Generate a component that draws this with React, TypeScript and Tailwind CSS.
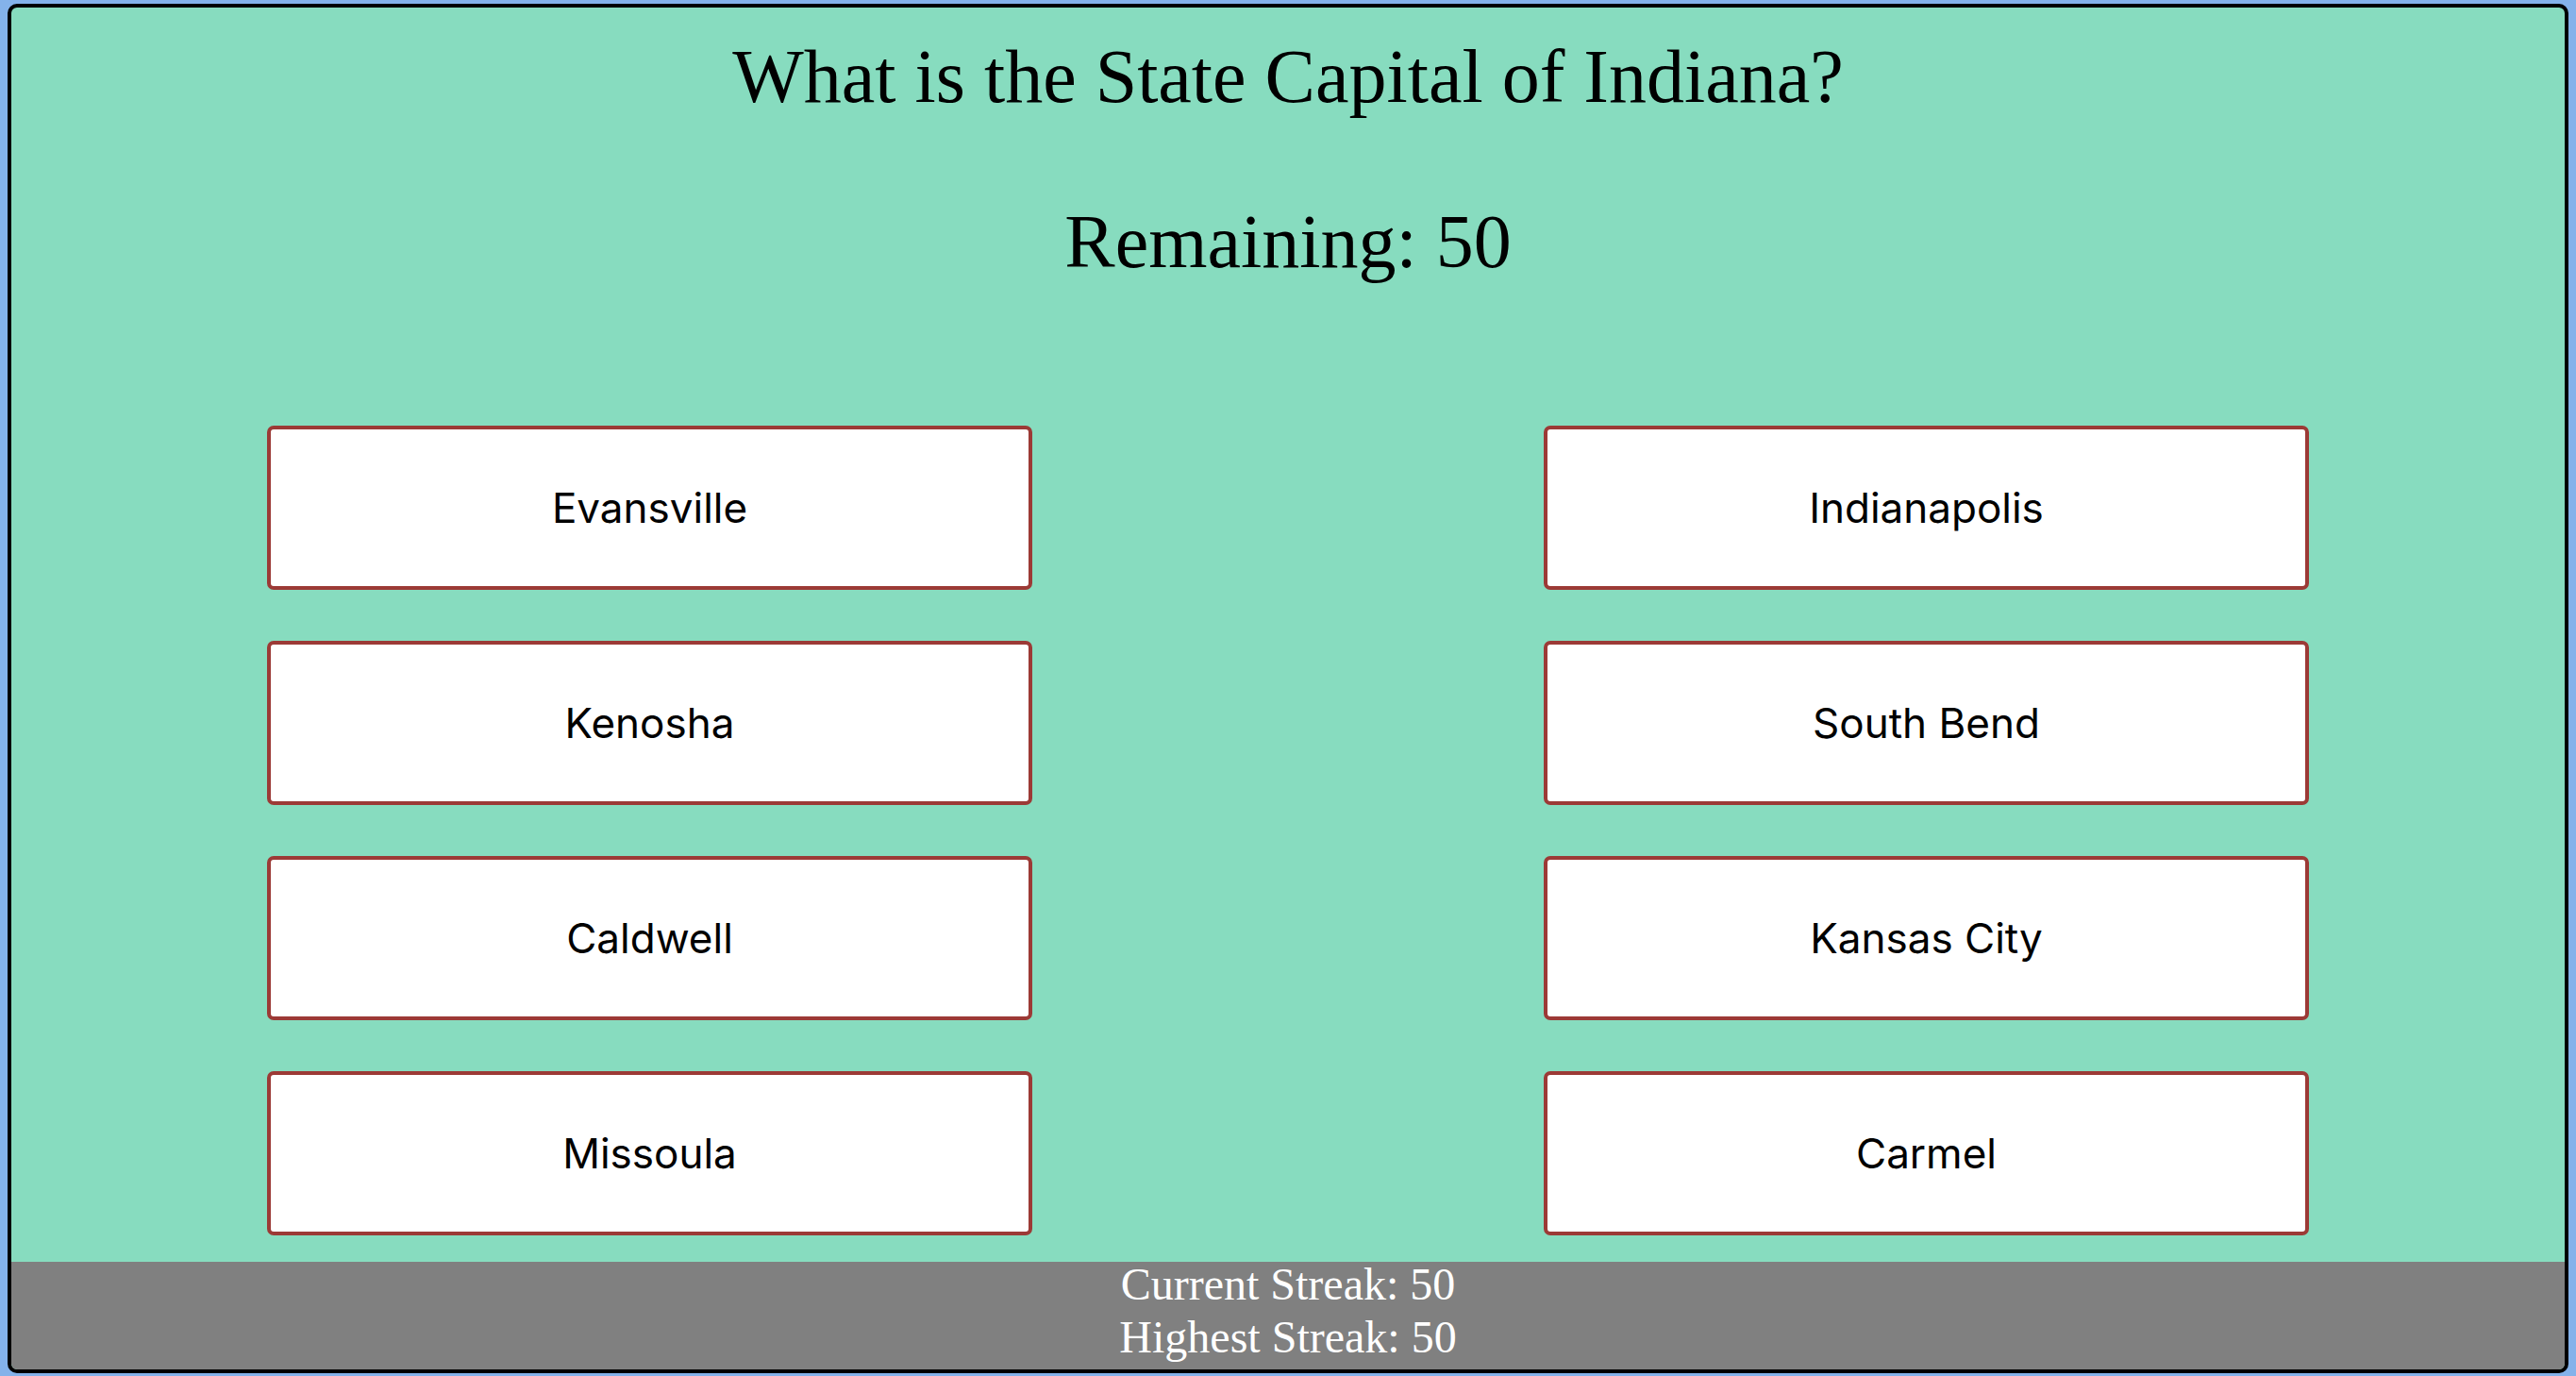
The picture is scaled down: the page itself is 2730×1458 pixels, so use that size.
const choices = [
  "Evansville",
  "Indianapolis",
  "Kenosha",
  "South Bend",
  "Caldwell",
  "Kansas City",
  "Missoula",
  "Carmel",
];

function Choice({ label }: { label: string }) {
  return (
    <div className="flex justify-center">
      <button className="w-[811px] h-[174px] bg-white border-4 border-[#9c3a36] rounded-[7px] text-black text-[44px] font-['Inter','Liberation_Sans',sans-serif] flex items-center justify-center">
        {label}
      </button>
    </div>
  );
}

export default function App() {
  return (
    <div className="w-full h-[1458px] bg-[#84b2ea] pl-[8px] pr-[8px] pt-[4px] overflow-hidden">
      <div className="h-[1451px] bg-[#87dcbf] border-4 border-black rounded-[10px] overflow-hidden flex flex-col font-['Liberation_Serif',serif]">
        <h1 className="mt-[27px] text-center text-[80px] leading-[92px] text-black">
          What is the State Capital of Indiana?
        </h1>
        <h1 className="mt-[83px] text-center text-[80px] leading-[92px] text-black">
          Remaining: 50
        </h1>
        <div className="mt-[149px] grid grid-cols-2 gap-y-[54px]">
          {choices.map((c) => (
            <Choice key={c} label={c} />
          ))}
        </div>
        <footer className="mt-auto h-[114px] bg-[#808080] text-white text-center text-[48px] leading-[56px]">
          <div className="-mt-[4px]">
            <p>Current Streak: 50</p>
            <p>Highest Streak: 50</p>
          </div>
        </footer>
      </div>
    </div>
  );
}
